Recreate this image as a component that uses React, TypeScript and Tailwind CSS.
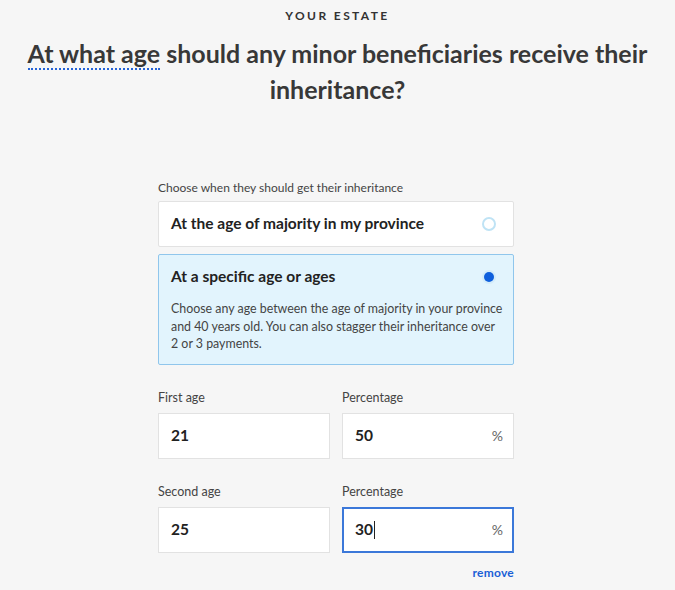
import React, { useState } from 'react';

const font = { fontFamily: 'Lato, "Noto Sans", sans-serif' };

function Radio({ checked }: { checked: boolean }) {
    return checked ? (
        <span className="w-[14px] h-[14px] rounded-full bg-[#d4ecfa] flex items-center justify-center">
            <span className="w-[10px] h-[10px] rounded-full bg-[#0f5fdc]" />
        </span>
    ) : (
        <span className="w-[14px] h-[14px] rounded-full border-2 border-[#bfe3f5] bg-white" />
    );
}

function Field({ label, value, suffix, focused }: { label: string; value: string; suffix?: string; focused?: boolean }) {
    return (
        <div className="flex flex-col">
            <div className="text-[12.5px] text-[#444] h-[15px] leading-[15px] mb-[8px]">{label}</div>
            <div
                className={`h-[46px] bg-white flex items-center ${
                    focused ? 'border-2 border-[#3b78d9] pl-[11px] pr-[9px]' : 'border border-[#e2e2e2] pl-[12px] pr-[10px]'
                }`}
            >
                <span className="text-[15.5px] font-bold text-[#222] flex-1 flex items-center">
                    {value}
                    {focused && <span className="inline-block w-[1px] h-[18px] bg-[#222] ml-[1px]" />}
                </span>
                {suffix && <span className="text-[14px] text-[#666]">{suffix}</span>}
            </div>
        </div>
    );
}

export default function App() {
    const [choice] = useState<'majority' | 'specific'>('specific');

    return (
        <div className="w-[675px] h-[590px] bg-[#f6f6f6] overflow-hidden text-[#333]" style={font}>
            <div className="pt-[7px] text-center text-[12px] font-bold tracking-[0.2em] text-[#333]">YOUR ESTATE</div>
            <h1 className="mt-[10px] text-center text-[25px] font-bold leading-[36px] text-[#383838] px-[16px]">
                <span className="border-b-2 border-dotted border-[#2463d8]">At what age</span> should any minor beneficiaries receive their inheritance?
            </h1>

            <div className="w-[356px] ml-[158px] mt-[72px]">
                <div className="text-[12px] text-[#444] mb-[4px]">Choose when they should get their inheritance</div>

                {/* 선택지 */}
                <div className="h-[46px] bg-white border border-[#e2e2e2] rounded-[2px] flex items-center justify-between pl-[12px] pr-[17px]">
                    <span className="text-[15.5px] font-bold text-[#222]">At the age of majority in my province</span>
                    <Radio checked={choice === 'majority'} />
                </div>

                <div className="mt-[7px] bg-[#e2f4fd] border border-[#90c6ec] rounded-[2px] pl-[12px] pr-[8px] pt-[11px] pb-[11px]">
                    <div className="flex items-center justify-between h-[22px] pr-[9px]">
                        <span className="text-[15.5px] font-bold text-[#222]">At a specific age or ages</span>
                        <Radio checked={choice === 'specific'} />
                    </div>
                    <p className="mt-[12px] text-[12.4px] leading-[17.5px] text-[#444]">
                        Choose any age between the age of majority in your province and 40 years old. You can also stagger their inheritance over 2 or 3 payments.
                    </p>
                </div>

                <div className="grid grid-cols-2 gap-x-[12px] mt-[25px]">
                    <Field label="First age" value="21" />
                    <Field label="Percentage" value="50" suffix="%" />
                </div>
                <div className="grid grid-cols-2 gap-x-[12px] mt-[25px]">
                    <Field label="Second age" value="25" />
                    <Field label="Percentage" value="30" suffix="%" focused />
                </div>

                <div className="flex justify-end mt-[11px]">
                    <button className="text-[12px] font-bold text-[#1a5fd6] tracking-[0.02em]">remove</button>
                </div>
            </div>
        </div>
    );
}
